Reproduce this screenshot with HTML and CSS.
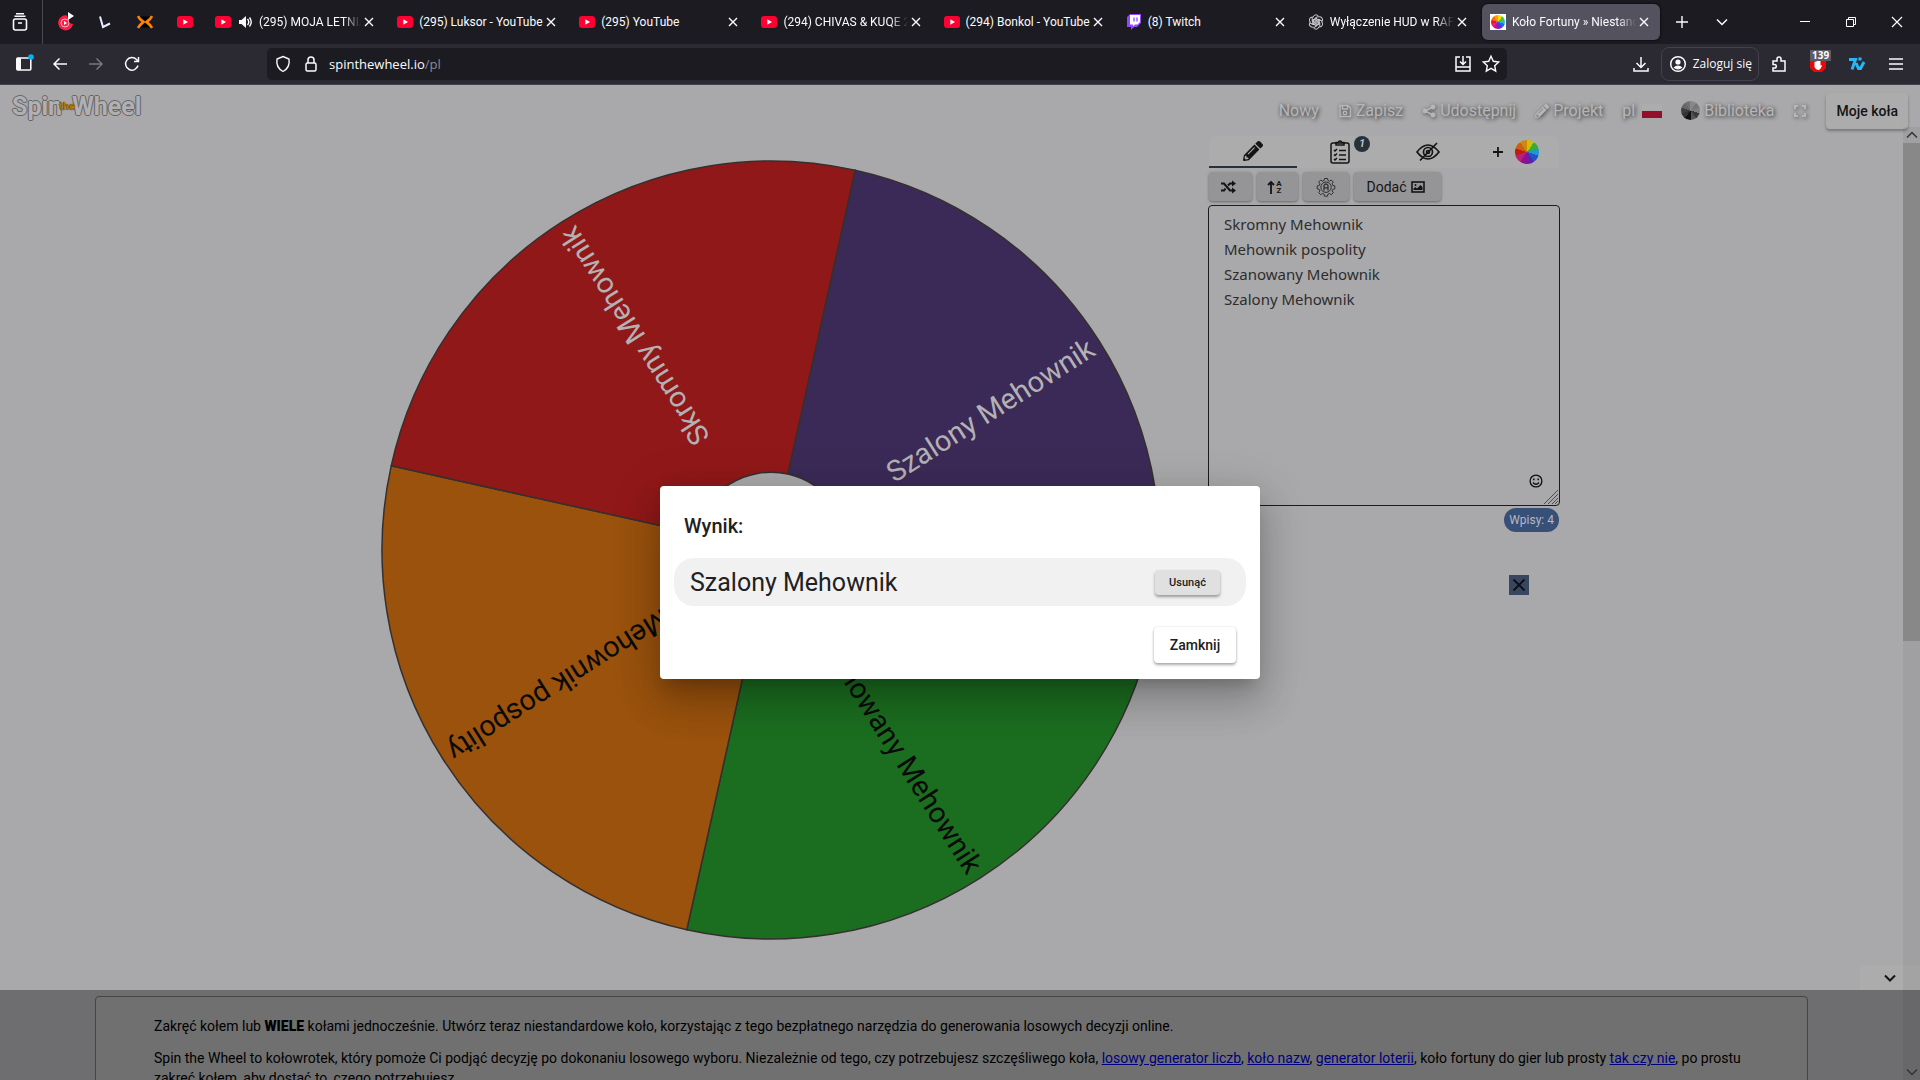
FILE: index.html
```html
<!DOCTYPE html>
<html lang="pl">
<head>
<meta charset="utf-8">
<title>Koło Fortuny » Niestandardowe koło</title>
<link rel="stylesheet" href="styles.css">
</head>
<body>
<svg class="defs" aria-hidden="true">
  <defs>
    <symbol id="yt" viewBox="0 0 16 16"><rect y="2" width="16" height="12" rx="3" fill="#ff0033"/><path d="M6.3 5.2v5.6L11 8z" fill="#fff"/></symbol>
    <symbol id="x" viewBox="0 0 16 16"><path d="M4 4l8 8M12 4l-8 8" stroke="currentColor" stroke-width="1.4" fill="none"/></symbol>
    <symbol id="chev" viewBox="0 0 16 16"><path d="M3 5.5l5 5 5-5" stroke="currentColor" stroke-width="1.5" fill="none"/></symbol>
    <symbol id="pencil" viewBox="0 0 512 512"><path fill="currentColor" d="M498 142l-46 46c-5 5-13 5-17 0L324 77c-5-5-5-12 0-17l46-46c19-19 49-19 68 0l60 60c19 19 19 49 0 68zM285 99L22 362 0 484c-3 16 12 30 28 28l122-22 263-263c5-5 5-13 0-17L302 99c-5-5-13-5-17 0zM124 340c-5-6-5-14 0-20l154-154c6-5 14-5 20 0s5 14 0 20L144 340c-6 5-14 5-20 0zm-36 84h48v36l-64 12-32-31 12-65h36z"/></symbol>
  </defs>
</svg>

<header class="chrome">
  <div class="tabbar">
    <button class="view-btn" aria-label="Widok"><svg class="i20" viewBox="0 0 20 20" fill="none" stroke="#fbfbfe" stroke-width="1.6"><rect x="3.5" y="7" width="13" height="11" rx="2"/><path d="M4.500 4.300h11M6 1.800h8M8 11h4"/></svg></button>
    <div class="pinned">
      <span class="pin"><svg class="i20" viewBox="0 0 20 20"><path d="M12 3.500a7.500 7.500 0 1 0 6 8.500l-4-1V8z" fill="#ff1e46"/><circle cx="10" cy="11" r="4" fill="none" stroke="#ffb4c0" stroke-width="1"/><path d="M9 9v4l3-2zM13 0v8l6-4z" fill="#fff"/></svg></span>
      <span class="pin"><svg class="i16" viewBox="0 0 16 16"><path d="M3 2.500L6 13l7-3.500" fill="none" stroke="#e8ecff" stroke-width="2"/></svg></span>
      <span class="pin"><svg class="i16" viewBox="0 0 16 16"><path d="M3 2.500h10L8 7zM3 13.500h10L8 9z" fill="#000"/><path d="M1 2c2 4 4 4.500 5.500 6C5 9.500 3 10 1 14M15 2c-2 4-4 4.500-5.500 6 1.500 1.500 3.500 2 5.500 6" fill="none" stroke="#ff8200" stroke-width="2.600"/></svg></span>
      <span class="pin"><svg class="i16"><use href="#yt"/></svg></span>
    </div>
    <nav class="tabs" aria-label="Karty">
      <div class="tab long"><svg class="i16"><use href="#yt"/></svg><svg class="i16" viewBox="0 0 16 16"><path d="M2 6h2.500L9 2v12L4.500 10H2z" fill="#fbfbfe"/><path d="M10.500 5q2.500 3 0 6M12.500 3.500q3.500 4.500 0 9" fill="none" stroke="#fbfbfe" stroke-width="1.400"/></svg><span class="tab-title">(295) MOJA LETNIA</span><button aria-label="Zamknij kartę"><svg class="i16"><use href="#x"/></svg></button></div>
      <div class="tab"><svg class="i16"><use href="#yt"/></svg><span class="tab-title">(295) Luksor - YouTube</span><button aria-label="Zamknij kartę"><svg class="i16"><use href="#x"/></svg></button></div>
      <div class="tab"><svg class="i16"><use href="#yt"/></svg><span class="tab-title">(295) YouTube</span><button aria-label="Zamknij kartę"><svg class="i16"><use href="#x"/></svg></button></div>
      <div class="tab long"><svg class="i16"><use href="#yt"/></svg><span class="tab-title">(294) CHIVAS &amp; KUQE 2</span><button aria-label="Zamknij kartę"><svg class="i16"><use href="#x"/></svg></button></div>
      <div class="tab"><svg class="i16"><use href="#yt"/></svg><span class="tab-title">(294) Bonkol - YouTube</span><button aria-label="Zamknij kartę"><svg class="i16"><use href="#x"/></svg></button></div>
      <div class="tab"><svg class="i16" viewBox="0 0 16 16"><path d="M1 3l3-3h11v9l-4 4H8l-3 3v-3H1z" fill="#9146ff"/><path d="M4 1h10v7l-2.500 2.500H9L7 12.500v-2H4z" fill="#fff"/><path d="M8 3.500v4M11 3.500v4" stroke="#9146ff" stroke-width="1.300"/></svg><span class="tab-title">(8) Twitch</span><button aria-label="Zamknij kartę"><svg class="i16"><use href="#x"/></svg></button></div>
      <div class="tab long"><svg class="i16" viewBox="0 0 16 16" fill="none" stroke="#c9c9cf" stroke-width="1"><g id="petal"><path d="M8 4.500L11 6.300v4.200M5 3.500a3 3 0 0 1 5.500-1.300l-3.500 2v4"/></g><use href="#petal" transform="rotate(60 8 8)"/><use href="#petal" transform="rotate(120 8 8)"/><use href="#petal" transform="rotate(180 8 8)"/><use href="#petal" transform="rotate(240 8 8)"/><use href="#petal" transform="rotate(300 8 8)"/></svg><span class="tab-title">Wyłączenie HUD w RAF</span><button aria-label="Zamknij kartę"><svg class="i16"><use href="#x"/></svg></button></div>
      <div class="tab long active"><span class="fav"><span class="rainbow"></span></span><span class="tab-title">Koło Fortuny » Niestand</span><button aria-label="Zamknij kartę"><svg class="i16"><use href="#x"/></svg></button></div>
    </nav>
    <div class="tab-tools">
      <button aria-label="Nowa karta"><svg class="i16" viewBox="0 0 16 16"><path d="M8 2v12M2 8h12" stroke="#fbfbfe" stroke-width="1.400"/></svg></button>
      <button aria-label="Lista kart"><svg class="i16"><use href="#chev"/></svg></button>
    </div>
    <div class="win">
      <button aria-label="Minimalizuj"><svg class="i16" viewBox="0 0 16 16"><path d="M3 7.500h10" stroke="#fff"/></svg></button>
      <button aria-label="Przywróć"><svg class="i16" viewBox="0 0 16 16" fill="none" stroke="#fff"><path d="M3.500 5.500h7v7h-7zM5.500 5V3.500h7v7H11"/></svg></button>
      <button aria-label="Zamknij okno"><svg class="i16" viewBox="0 0 16 16"><path d="M3 3l10 10M13 3L3 13" stroke="#fff" stroke-width="1.200"/></svg></button>
    </div>
  </div>
  <div class="toolbar">
    <div class="nav-btns">
      <button aria-label="Panel boczny"><svg class="i20" viewBox="0 0 20 20"><rect x="2.800" y="4" width="14" height="12" rx="1" fill="none" stroke="#fbfbfe" stroke-width="1.600"/><path d="M3 4h4v12H3z" fill="#fbfbfe"/><circle cx="17" cy="3" r="2.800" fill="#00b3f4"/></svg></button>
      <button aria-label="Wstecz"><svg class="i20" viewBox="0 0 20 20" fill="none" stroke="#fbfbfe" stroke-width="1.500"><path d="M17 10H4M9.500 4.500L4 10l5.500 5.500"/></svg></button>
      <button aria-label="Dalej"><svg class="i20" viewBox="0 0 20 20" fill="none" stroke="#77767f" stroke-width="1.500"><path d="M3 10h13M10.500 4.500L16 10l-5.500 5.500"/></svg></button>
      <button aria-label="Odśwież"><svg class="i20" viewBox="0 0 20 20" fill="none" stroke="#fbfbfe" stroke-width="1.500"><path d="M16 11.500A6.300 6.300 0 1 1 14.500 5.500L16 7M16.500 3v4.500H12"/></svg></button>
    </div>
    <div class="urlbar">
      <svg class="i20" viewBox="0 0 20 20" fill="none" stroke="#fbfbfe" stroke-width="1.400"><path d="M10 2.500l6 2.500c.800 5-1.500 10-6 12.500C5.500 15 3.200 10 4 5z"/></svg>
      <svg class="i20" viewBox="0 0 20 20" fill="none" stroke="#fbfbfe" stroke-width="1.500"><rect x="5" y="9" width="10" height="8" rx="1.500"/><path d="M7 9V6a3 3 0 0 1 6 0v3"/></svg>
      <span class="url">spinthewheel.io<span class="path">/pl</span></span>
      <svg class="i20" viewBox="0 0 20 20" fill="none" stroke="#fbfbfe" stroke-width="1.500"><path d="M7 3H3v10h14V3h-4M3 13v4h14v-4M10 2v8M7 7.500l3 3 3-3"/></svg>
      <svg class="i20" viewBox="0 0 20 20" fill="none" stroke="#fbfbfe" stroke-width="1.400"><path d="M10 2.300l2.300 5 5.400.700-4 3.700 1 5.400-4.700-2.700-4.700 2.700 1-5.400-4-3.700 5.400-.700z"/></svg>
    </div>
    <div class="right-tools">
      <button aria-label="Pobrane"><svg class="i20" viewBox="0 0 20 20" fill="none" stroke="#fbfbfe" stroke-width="1.500"><path d="M10 3v10M5.500 9l4.500 4.500L14.500 9M3 14v3h14v-3"/></svg></button>
      <button class="login"><svg class="i20" viewBox="0 0 20 20"><circle cx="10" cy="10" r="7.300" fill="none" stroke="#fbfbfe" stroke-width="1.500"/><circle cx="10" cy="8" r="2.600" fill="#fbfbfe"/><path d="M5.500 13.500q4.500-4 9 0-4.500 4-9 0z" fill="#fbfbfe"/></svg>Zaloguj się</button>
      <button aria-label="Rozszerzenia"><svg class="i20" viewBox="0 0 20 20" fill="none" stroke="#fbfbfe" stroke-width="1.500"><path d="M4 7h4V5a2 2 0 0 1 4 0v2h4v10H4v-3h1.500a1.800 1.800 0 0 0 0-3.600H4z"/></svg></button>
      <button class="block" aria-label="Blokada reklam"><svg class="i20" viewBox="0 0 20 20"><path d="M6 2h8l4 4v8l-4 4H6l-4-4V6z" fill="#e80a0a"/><path d="M6.500 8v5q1.500 3.500 4 3 2.500-.500 3.500-5l-1.500.500V6z" fill="#fff"/></svg><span class="count">139</span></button>
      <button aria-label="7TV"><svg class="i20" viewBox="0 0 20 20" fill="none" stroke="#29b6f6" stroke-width="3"><path d="M2 5.500h6.500L5 15.500M9 9l2.500 5.500h2L17 8M11.500 5h3"/></svg></button>
      <button aria-label="Menu"><svg class="i20" viewBox="0 0 20 20" stroke="#fbfbfe" stroke-width="1.400"><path d="M3 5h14M3 10h14M3 15h14"/></svg></button>
    </div>
  </div>
</header>

<div class="page">
  <header class="site-head">
    <a class="logo" href="#">Spin<span class="the">the</span>Wheel</a>
    <nav class="menu">
      <a href="#">Nowy</a>
      <a href="#"><svg class="i14" viewBox="0 0 14 14" fill="none" stroke="currentColor" stroke-width="1.400"><path d="M2 1.500h8L12.500 4v8.500H2zM4.500 2v3h5V2"/><circle cx="7" cy="9" r="1.700"/></svg>Zapisz</a>
      <a href="#"><svg class="i14" viewBox="0 0 14 14" fill="currentColor"><path d="M11 3L3 7l8 4" fill="none" stroke="currentColor" stroke-width="1.500"/><circle cx="11" cy="3" r="2.400"/><circle cx="3" cy="7" r="2.400"/><circle cx="11" cy="11" r="2.400"/></svg>Udostępnij</a>
      <a href="#"><svg class="i14"><use href="#pencil"/></svg>Projekt</a>
      <a class="lang" href="#">pl <span class="flag"></span></a>
      <a href="#"><span class="greywheel"></span>Biblioteka</a>
      <button class="full" aria-label="Pełny ekran"><svg class="i14" viewBox="0 0 14 14" fill="none" stroke="currentColor" stroke-width="2"><path d="M2 5V2h3M9 2h3v3M12 9v3H9M5 12H2V9"/></svg></button>
      <button class="mine">Moje koła</button>
    </nav>
  </header>

  <main class="stage">
    <svg class="wheel" viewBox="-391 -391 782 782" role="img" aria-label="Koło fortuny">
      <g stroke="#35302f" stroke-width="1.500" transform="rotate(12.500)">
        <path d="M0-390A390 390 0 0 1 390 0L78 0A78 78 0 0 0 0-78z" fill="#3b2a57"/>
        <path d="M390 0A390 390 0 0 1 0 390L0 78A78 78 0 0 0 78 0z" fill="#1b6e20"/>
        <path d="M0 390A390 390 0 0 1-390 0L-78 0A78 78 0 0 0 0 78z" fill="#9a520d"/>
        <path d="M-390 0A390 390 0 0 1 0-390L0-78A78 78 0 0 0-78 0z" fill="#911818"/>
      </g>
      <g class="labels">
        <text class="light" transform="rotate(-32.500)" x="381" y="10">Szalony Mehownik</text>
        <text transform="rotate(57.500)" x="381" y="10">Szanowany Mehownik</text>
        <text transform="rotate(147.500)" x="381" y="10">Mehownik pospolity</text>
        <text class="light" transform="rotate(237.500)" x="381" y="10">Skromny Mehownik</text>
      </g>
    </svg>

    <aside class="side">
      <div class="modes">
        <button class="on" aria-label="Edytuj"><svg class="i20"><use href="#pencil"/></svg></button>
        <button class="results" aria-label="Wyniki"><svg class="i24" viewBox="0 0 24 24" fill="none" stroke="#141414" stroke-width="1.500"><rect x="3" y="3" width="18" height="20" rx="2"/><path d="M8 5V2.500h2.500a1.500 1.500 0 0 1 3 0H16V5zM6 10l1 1 2-2M6 14.500l1 1 2-2M6 19l1 1 2-2M11 10.500h7M11 15h7M11 19.500h7"/></svg><span class="badge">1</span></button>
        <button aria-label="Ukryj"><svg class="i24" viewBox="0 0 24 24" fill="none" stroke="#141414" stroke-width="1.700"><path d="M1 12q11-14 22 0-11 14-22 0zM4 20.500L21 3"/><circle cx="12" cy="12" r="4.500"/><circle cx="12" cy="12" r="1.500"/></svg></button>
        <button class="add-wheel" aria-label="Dodaj koło"><svg class="i14" viewBox="0 0 14 14"><path d="M7 2v10M2 7h10" stroke="#141414" stroke-width="1.800"/></svg><span class="rainbow big"></span></button>
      </div>
      <div class="actions">
        <button class="shuffle" aria-label="Tasuj"><svg class="i16" viewBox="0 0 16 16" fill="none" stroke="#141414" stroke-width="2"><path d="M1 4.500h3l6 7h3M1 11.500h3l1.500-2M8 6.500l2-2h3"/><path d="M12 1.500v6l4-3zM12 8.500v6l4-3z" fill="#141414" stroke="none"/></svg></button>
        <button class="sort" aria-label="Sortuj"><svg class="arrow" viewBox="0 0 8 14" fill="none" stroke="#141414" stroke-width="1.800"><path d="M4 14V2M1 5l3-3 3 3"/></svg><span class="az">A<br>Z</span></button>
        <button class="auto" aria-label="Automatycznie"><svg class="i20" viewBox="0 0 20 20" fill="none" stroke="#303030" stroke-linejoin="round"><path d="M8.500 1.500h3l.4 2 1.600.7 1.800-1.200 2 2-1.200 1.800.7 1.700 2 .4v3l-2 .4-.7 1.600 1.200 1.800-2 2-1.800-1.200-1.600.7-.4 2h-3l-.4-2-1.600-.7-1.800 1.200-2-2 1.200-1.800-.7-1.600-2-.4v-3l2-.4.7-1.700L2.700 5l2-2 1.800 1.200 1.600-.7z"/><circle cx="10" cy="10.200" r="5.200"/><path d="M8 13.500V8.500q2-3 4 0v5M8 10.800h4" stroke-width="1.300"/></svg></button>
        <button class="add">Dodać <svg class="i14" viewBox="0 0 14 14"><rect x="1" y="2" width="12" height="10" fill="none" stroke="#141414" stroke-width="1.600"/><path d="M2.500 10V8.500l2-1.500 1.500 1.500L9.500 5l2 2v3z" fill="#141414"/><circle cx="4.500" cy="5" r="1" fill="#141414"/></svg></button>
      </div>
      <div class="entries">
        <textarea aria-label="Wpisy" spellcheck="false">Skromny Mehownik
Mehownik pospolity
Szanowany Mehownik
Szalony Mehownik</textarea>
        <button class="smile" aria-label="Emoji"><svg class="i14" viewBox="0 0 14 14" fill="none" stroke="#0e0e0e" stroke-width="1.300"><circle cx="7" cy="7" r="5.900"/><path d="M4 8.500q3 3.500 6 0" /><path d="M4.800 4.500v1.800M9.200 4.500v1.800" stroke-width="1.500"/></svg></button>
        <svg class="grip" viewBox="0 0 16 16" stroke="#4d4d4e"><path d="M1 15L15 1M5 15L15 5M9 15l6-6M12 15l3-3"/></svg>
      </div>
      <span class="count-pill">Wpisy: 4</span>
      <button class="close-ad" aria-label="Zamknij"><svg class="i20" viewBox="0 0 20 20"><path d="M4.500 4.500l11 11M15.500 4.500l-11 11" stroke="#0c0f15" stroke-width="1.800"/></svg></button>
    </aside>
    <button class="down" aria-label="Przewiń w dół"><svg class="i16" viewBox="0 0 16 16"><path d="M3 5.500l5 5 5-5" stroke="#141414" stroke-width="2" fill="none"/></svg></button>
  </main>

  <section class="info">
    <div class="info-card">
      <p>Zakręć kołem lub <strong>WIELE</strong> kołami jednocześnie. Utwórz teraz niestandardowe koło, korzystając z tego bezpłatnego narzędzia do generowania losowych decyzji online.</p>
      <p>Spin the Wheel to kołowrotek, który pomoże Ci podjąć decyzję po dokonaniu losowego wyboru. Niezależnie od tego, czy potrzebujesz szczęśliwego koła, <a href="#">losowy generator liczb</a>, <a href="#">koło nazw</a>, <a href="#">generator loterii</a>, koło fortuny do gier lub prosty <a href="#">tak czy nie</a>, po prostu zakręć kołem, aby dostać to, czego potrzebujesz.</p>
    </div>
  </section>

  <div class="scrollbar" aria-hidden="true">
    <svg class="i16 up"><use href="#chev"/></svg>
    <span class="thumb"></span>
    <svg class="i16"><use href="#chev"/></svg>
  </div>

  <div class="backdrop">
    <div class="dialog" role="dialog" aria-labelledby="dlg-title">
      <h2 id="dlg-title">Wynik:</h2>
      <div class="result"><span>Szalony Mehownik</span><button class="remove">Usunąć</button></div>
      <div class="dialog-foot"><button class="shut">Zamknij</button></div>
    </div>
  </div>
</div>
</body>
</html>
```
FILE: styles.css
```css
* { box-sizing: border-box; }

html, body { height: 100%; }

body {
  margin: 0;
  display: flex;
  flex-direction: column;
  overflow: hidden;
  font-family: Roboto, sans-serif;
  background: #a9a9ab;
  color: #141414;
}

button {
  margin: 0;
  padding: 0;
  border: 0;
  background: none;
  color: inherit;
  font: inherit;
  display: flex;
  align-items: center;
  justify-content: center;
}

svg { display: block; flex: none; }
.defs { position: absolute; width: 0; height: 0; }
.i14 { width: 14px; height: 14px; }
.i16 { width: 16px; height: 16px; }
.i20 { width: 20px; height: 20px; }
.i24 { width: 24px; height: 24px; }

/* Browser chrome */
.chrome {
  flex: none;
  color: #fbfbfe;
  font: 12px/16px "Open Sans", sans-serif;
}

.tabbar {
  display: flex;
  align-items: stretch;
  height: 44px;
  background: #1c1b22;
}

.view-btn { width: 43px; border-right: 1px solid #4a4950; padding-right: 3px; }

.pinned { display: flex; align-items: center; padding: 0 0 0 2px; }
.pin { width: 40px; display: flex; justify-content: center; }

.tabs { display: flex; flex: 0 1 1457px; min-width: 0; }
.tab {
  flex: 1 1 0;
  min-width: 0;
  margin: 4px 2px;
  padding: 0 8px;
  display: flex;
  align-items: center;
  gap: 6px;
  border-radius: 6px;
}
.tab.active { background: #53525e; box-shadow: 0 0 3px #000; }
.tab-title {
  flex: 1;
  min-width: 0;
  margin-right: -6px;
  overflow: hidden;
  white-space: nowrap;
  font-family: Roboto, sans-serif;
}
.long .tab-title { mask-image: linear-gradient(to left, transparent, #000 18px); }
.fav { flex: none; width: 16px; height: 16px; padding: 1px; background: #fff; }
.rainbow {
  display: block;
  width: 14px;
  height: 14px;
  border-radius: 50%;
  background: repeating-conic-gradient(#f2e300 0 36deg, #46c83c 0 72deg, #1fb6f0 0 108deg, #2563e8 0 144deg, #7a22c8 0 180deg, #a019a8 0 216deg, #e0218a 0 252deg, #e01e1e 0 288deg, #f07014 0 324deg, #f4a012 0 360deg);
}

.tab-tools { display: flex; gap: 24px; padding-left: 12px; }
.win { display: flex; gap: 30px; margin-left: auto; padding-right: 15px; }

.toolbar {
  display: flex;
  align-items: center;
  height: 41px;
  padding: 0 14px;
  background: #2b2a33;
  border-bottom: 1px solid #42414d;
}
.nav-btns { display: flex; gap: 16px; flex: 1 1 253px; }
.urlbar {
  flex: 5 1 1240px;
  height: 32px;
  padding: 0 6px;
  display: flex;
  align-items: center;
  gap: 8px;
  border-radius: 5px;
  background: #1c1b22;
}
.url { flex: 1; font-size: 13px; }
.path { color: #8b8a92; }
.right-tools { flex: 1 1 399px; display: flex; align-items: center; justify-content: flex-end; gap: 19px; }
.login { height: 34px; padding: 0 6px; gap: 5px; border: 1px solid #42414d; border-radius: 8px; margin: 0 -9px; }
.block { position: relative; }
.count {
  position: absolute;
  top: -4px;
  left: 2px;
  padding: 0 2px;
  font: bold 10px/11px "Open Sans", sans-serif;
  background: #5b5b66;
}

/* Site */
.page { position: relative; flex: 1; overflow: hidden; }

.site-head {
  display: flex;
  align-items: center;
  justify-content: space-between;
  height: 51px;
  padding: 0 12px;
}
.logo {
  display: flex;
  align-items: center;
  margin-bottom: 8px;
  color: #b0b0b2;
  font-size: 25px;
  font-weight: 700;
  line-height: 28px;
  text-decoration: none;
  text-shadow: 1px 0 #666, -1px 0 #666, 0 1px #666, 0 -1px #666;
}
.the { margin: 0 -3px; color: #b07a00; font-size: 11px; z-index: 1; text-shadow: 0 0 1px #000; }

.menu { display: flex; align-items: center; gap: 19px; }
.menu a, .full {
  display: flex;
  align-items: center;
  gap: 4px;
  color: #b6b6b8;
  font-size: 16px;
  line-height: 20px;
  text-decoration: none;
  text-shadow: 1px 1px 4px #222;
}
.menu a svg, .full svg { filter: drop-shadow(1px 1px 2px #444); }
.menu .lang { gap: 7px; }
.flag { width: 20px; height: 14px; background: linear-gradient(#acacac 50%, #930f2a 50%); }
.greywheel {
  width: 19px;
  height: 19px;
  border-radius: 50%;
  background: conic-gradient(#888 0 36deg, #777 0 72deg, #808080 0 108deg, #3a3a3a 0 144deg, #555 0 180deg, #111 0 216deg, #333 0 252deg, #3f3f3f 0 288deg, #666 0 324deg, #707070 0);
}
.mine, .shut {
  height: 36px;
  border-radius: 4px;
  font-size: 14px;
  font-weight: 500;
}
.mine { padding: 0 10px; background: #acacac; box-shadow: 0 2px 3px #777; }

.stage {
  position: relative;
  display: grid;
  grid-template-columns: 334fr 874fr 352px 360fr;
  padding-bottom: 50px;
}
.wheel { grid-column: 2; margin: 24px 47px 0; }
.labels { font-size: 29px; text-anchor: end; fill: #0a0a0a; }
.labels .light { fill: #b3b1b4; }

.side { grid-column: 3; display: flex; flex-direction: column; }

.modes { display: flex; height: 32px; background: #acacac; border-radius: 8px 8px 0 0; margin: 0 1px; }
.modes button { flex: 1 1 0; }
.modes .on { border-bottom: 2px solid #26323b; }
.results { position: relative; }
.badge {
  position: absolute;
  top: 0;
  right: 14px;
  width: 16px;
  height: 16px;
  border-radius: 50%;
  background: #26323b;
  color: #bbb;
  font: italic bold 11px/16px Roboto, sans-serif;
}
.modes .add-wheel { gap: 10px; }
.rainbow.big { width: 24px; height: 24px; filter: brightness(.85); }

.actions { display: flex; gap: 5px; margin: 4px 1px; }
.actions button {
  height: 29px;
  border-radius: 4px;
  background: #959597;
  box-shadow: 0 1px 3px #666;
}
.actions .shuffle { width: 43px; padding-right: 6px; }
.actions .sort { width: 41px; padding-right: 6px; gap: 1px; }
.actions .auto { width: 46px; }
.actions .add { width: 87px; gap: 4px; padding-right: 4px; font-size: 14px; }
.arrow { width: 8px; height: 14px; }
.az { font: bold 8px/7px Roboto, sans-serif; }

.entries { position: relative; }
textarea {
  display: block;
  width: 100%;
  height: 301px;
  padding: 6px 15px;
  border: 1px solid #1c1c1c;
  border-radius: 4px;
  background: none;
  color: #2d2d2d;
  resize: none;
  outline: 0;
  font: 15px/25px "Noto Sans", sans-serif;
}
.smile { position: absolute; right: 17px; bottom: 18px; }
.grip { position: absolute; right: 1px; bottom: 1px; width: 16px; height: 16px; }

.count-pill {
  align-self: flex-end;
  margin: 2px 1px 0 0;
  padding: 0 5px;
  border-radius: 12px;
  background: #384f78;
  color: #b4b9c2;
  font-size: 12px;
  line-height: 24px;
}
.close-ad { align-self: flex-end; margin: 43px 31px 0 0; background: #38475f; }

.down {
  position: absolute;
  right: 0;
  bottom: 0;
  width: 60px;
  height: 25px;
  background: #acacac;
  border-radius: 5px 0 0 0;
}

.info { padding: 6px 112px 0 95px; background: #6e6e70; }
.info-card {
  padding: 19px 58px;
  border: 1px solid #454546;
  border-radius: 4px;
  background: #707070;
  color: #000;
  font-size: 14px;
  line-height: 20px;
}
.info p { margin: 0 0 12px; }
.info strong { font-weight: 900; }
.info a { color: #000080; }

.scrollbar {
  position: absolute;
  top: 42px;
  right: 0;
  bottom: 0;
  width: 17px;
  display: flex;
  flex-direction: column;
  align-items: center;
  background: rgba(0, 0, 0, .05);
  color: #333;
}
.scrollbar .up { transform: rotate(180deg); }
.thumb { width: 17px; height: 498px; margin-bottom: auto; background: rgba(0, 0, 0, .15); }

/* Result dialog */
.backdrop {
  position: absolute;
  inset: 0;
  display: flex;
  align-items: center;
  justify-content: center;
}
.dialog {
  width: 600px;
  max-width: 90%;
  padding: 28px 14px 16px;
  border-radius: 4px;
  background: #fff;
  color: #212121;
  box-shadow: 0 11px 15px -7px rgba(0, 0, 0, .2), 0 24px 38px 3px rgba(0, 0, 0, .14), 0 9px 46px 8px rgba(0, 0, 0, .12);
}
.dialog h2 { margin: 0 10px 20px; font-size: 20px; font-weight: 500; line-height: 24px; }
.result {
  display: flex;
  align-items: center;
  justify-content: space-between;
  height: 48px;
  padding: 0 26px 0 16px;
  border-radius: 20px;
  background: #f1f1f1;
  font-size: 25px;
}
.remove {
  width: 65px;
  height: 25px;
  border-radius: 4px;
  background: #e0e0e0;
  font-size: 11px;
  font-weight: 500;
  box-shadow: 0 2px 3px #999;
}
.dialog-foot { display: flex; justify-content: flex-end; padding: 21px 10px 0; }
.shut { width: 82px; box-shadow: 0 2px 3px #aaa, 0 0 2px #ddd; }
```
